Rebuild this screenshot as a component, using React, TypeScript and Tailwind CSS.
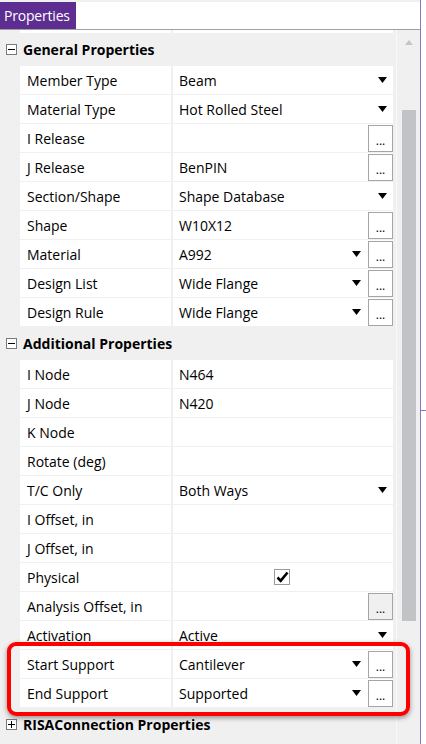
import React from 'react';

type Row = {
  label: string;
  value?: string;
  arrow?: boolean;
  button?: boolean;
  check?: boolean;
  grayBtn?: boolean;
};

const general: Row[] = [
  { label: 'Member Type', value: 'Beam', arrow: true },
  { label: 'Material Type', value: 'Hot Rolled Steel', arrow: true },
  { label: 'I Release', button: true },
  { label: 'J Release', value: 'BenPIN', button: true },
  { label: 'Section/Shape', value: 'Shape Database', arrow: true },
  { label: 'Shape', value: 'W10X12', button: true },
  { label: 'Material', value: 'A992', arrow: true, button: true },
  { label: 'Design List', value: 'Wide Flange', arrow: true, button: true },
  { label: 'Design Rule', value: 'Wide Flange', arrow: true, button: true },
];

const additional: Row[] = [
  { label: 'I Node', value: 'N464' },
  { label: 'J Node', value: 'N420' },
  { label: 'K Node' },
  { label: 'Rotate (deg)' },
  { label: 'T/C Only', value: 'Both Ways', arrow: true },
  { label: 'I Offset, in' },
  { label: 'J Offset, in' },
  { label: 'Physical', check: true },
  { label: 'Analysis Offset, in', button: true, grayBtn: true },
  { label: 'Activation', value: 'Active', arrow: true },
  { label: 'Start Support', value: 'Cantilever', arrow: true, button: true },
  { label: 'End Support', value: 'Supported', arrow: true, button: true },
];

const Arrow = () => (
  <svg width="9" height="6" viewBox="0 0 9 6" className="shrink-0">
    <path d="M0 0h9L4.5 6z" fill="#000" />
  </svg>
);

const ExpandBox = ({ open }: { open: boolean }) => (
  <div className="w-[11px] h-[11px] border border-[#7a7a7a] bg-white flex items-center justify-center relative shrink-0">
    <div className="w-[7px] h-px bg-black" />
    {!open && <div className="absolute w-px h-[7px] bg-black" />}
  </div>
);

const SectionHeader = ({ title, open }: { title: string; open: boolean }) => (
  <div className="h-[33px] flex items-center pl-[6px] gap-[6px] shrink-0">
    <ExpandBox open={open} />
    <span className="text-[14px] font-bold text-black">{title}</span>
  </div>
);

const PropRow = ({ row }: { row: Row }) => (
  <div className="h-[29px] flex pb-px shrink-0">
    <div className="w-[20px] shrink-0" />
    <div className="w-[151px] shrink-0 bg-white flex items-center pl-[7px] text-[14px] text-black">
      {row.label}
    </div>
    <div className="w-[2px] shrink-0" />
    <div className="w-[220px] shrink-0 bg-white flex items-center pl-[6px] text-[14px] text-black">
      <span className="flex-1">{row.value}</span>
      {row.check && (
        <div className="absolute ml-[95px] w-[16px] h-[16px] border border-[#9a9a9a] bg-white flex items-center justify-center">
          <svg width="13" height="12" viewBox="0 0 13 12">
            <path d="M1.5 6.5l3.2 3.3L11.5 1.5" stroke="#000" strokeWidth="2.6" fill="none" />
          </svg>
        </div>
      )}
      {row.arrow && (
        <div className={row.button ? 'mr-[7px]' : 'mr-[6px]'}>
          <Arrow />
        </div>
      )}
      {row.button && (
        <div
          className={`w-[25px] h-[27px] shrink-0 border border-[#a5a5a5] flex items-end justify-center pb-[4px] text-[12px] leading-none ${
            row.grayBtn ? 'bg-[#f0f0f0]' : 'bg-white'
          }`}
        >
          ...
        </div>
      )}
    </div>
  </div>
);

export default function App() {
  return (
    <div
      className="w-[426px] h-[744px] bg-white relative overflow-hidden flex"
      style={{ fontFamily: '"Open Sans", "Noto Sans", sans-serif' }}
    >
      <div className="w-[420px] h-full flex flex-col bg-[#f0f0f0]">
        {/* tab strip */}
        <div className="h-[30px] shrink-0 flex flex-col">
          <div className="h-[2px] bg-[#f0f0f0]" />
          <div className="flex-1 flex bg-white border-b border-[#a0a0a0]">
            <div className="w-[76px] bg-[#5d2d91] text-white text-[14px] tracking-[-0.2px] pl-[4px] flex items-center leading-none overflow-hidden whitespace-nowrap">
              Properties
            </div>
          </div>
        </div>

        <div className="flex-1 flex min-h-0">
          {/* property grid */}
          <div className="w-[396px] shrink-0 flex flex-col overflow-hidden">
            <div className="h-[3px] flex shrink-0">
              <div className="w-[20px]" />
              <div className="w-[151px] bg-white" />
              <div className="w-[2px]" />
              <div className="w-[220px] bg-white" />
            </div>
            <SectionHeader title="General Properties" open />
            {general.map((r) => (
              <PropRow key={r.label} row={r} />
            ))}
            <SectionHeader title="Additional Properties" open />
            {additional.map((r) => (
              <PropRow key={r.label} row={r} />
            ))}
            <SectionHeader title="RISAConnection Properties" open={false} />
          </div>
          {/* scrollbar */}
          <div className="w-px bg-[#f9f9f9] shrink-0" />
          <div className="flex-1 flex flex-col items-center pt-[10px]">
            <svg width="8" height="5" viewBox="0 0 8 5">
              <path d="M0 5h8L4 0z" fill="#c4c4c4" />
            </svg>
            <div className="mt-[65px] w-[14px] h-[511px] bg-[#c2c3c7]" />
          </div>
        </div>
      </div>
      <div className="w-px h-full bg-[#8c73c4] shrink-0" />
      <div className="flex-1 relative">
        <div className="absolute top-[410px] left-0 w-[5px] h-px bg-[#8c73c4]" />
      </div>

      {/* highlight */}
      <div className="absolute left-[7px] top-[642px] w-[403px] h-[74px] border-4 border-[#ff0000] rounded-[9px] shadow-[0_2px_5px_rgba(0,0,0,0.4)] pointer-events-none" />
    </div>
  );
}
